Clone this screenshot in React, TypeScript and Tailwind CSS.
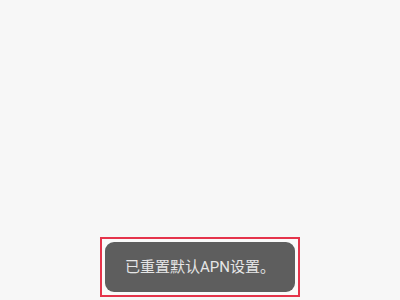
export default function App() {
  return (
    <div className="w-[400px] h-[300px] bg-[#f7f7f7] flex flex-col items-center justify-end pb-[3px]">
      {/* Highlighted toast */}
      <div className="w-[200px] h-[60px] border-2 border-[#e5344b] bg-[#fafafa] p-[3px] flex">
        <div
          className="flex-1 rounded-[9px] bg-[#5e5e5e] flex items-center justify-center text-[15px] text-[#e6e6e6]"
          style={{ fontFamily: '"Roboto", "Noto Sans CJK SC", sans-serif' }}
        >
          已重置默认APN设置。
        </div>
      </div>
    </div>
  );
}
